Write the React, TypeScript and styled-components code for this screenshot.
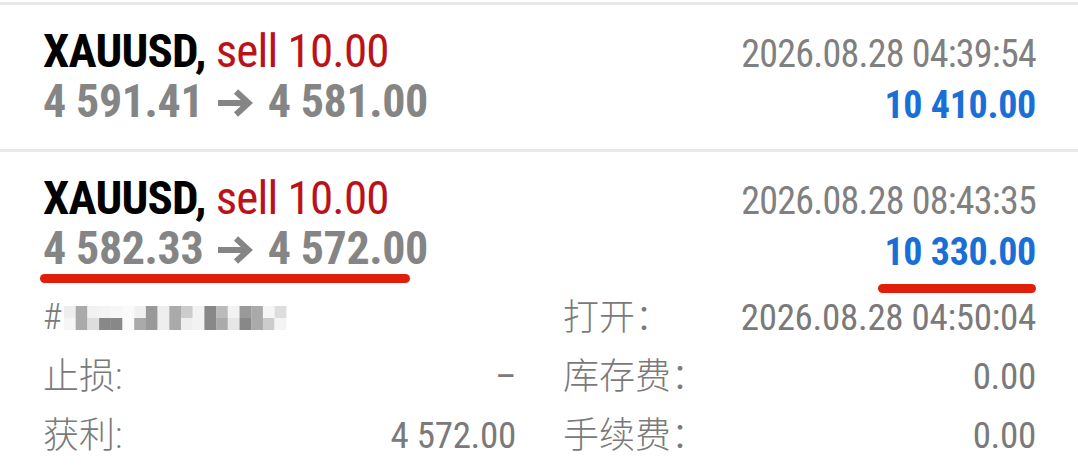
import React from "react";
import styled, { createGlobalStyle } from "styled-components";

const GlobalStyle = createGlobalStyle`
  body {
    margin: 0;
    background: #fff;
    font-family: "Roboto Condensed", Roboto, "Noto Sans CJK SC", sans-serif;
    font-stretch: 75%;
  }
`;

type Deal = {
  symbol: string;
  side: string;
  volume: string;
  open: string;
  close: string;
  time: string;
  profit: string;
};

const deals: Deal[] = [
  { symbol: "XAUUSD,", side: "sell", volume: "10.00", open: "4 591.41", close: "4 581.00", time: "2026.08.28 04:39:54", profit: "10 410.00" },
  { symbol: "XAUUSD,", side: "sell", volume: "10.00", open: "4 582.33", close: "4 572.00", time: "2026.08.28 08:43:35", profit: "10 330.00" },
];

// blurred ticket number
const mosaic = [
  ["#eee", "#aaa", "#f2f2f2", "#f4f4f4", "#f6f6f6", "#fafafa", "#f0f0f0", "#999", "#eee", "#aaa", "#ccc", "#f2f2f2", "#888", "#bbb", "#f2f2f2", "#999", "#aaa", "#f6f6f6", "#ddd"],
  ["#f6f6f6", "#aaa", "#ddd", "#888", "#888", "#fafafa", "#aaa", "#999", "#eee", "#aaa", "#eee", "#f2f2f2", "#888", "#aaa", "#e6e6e6", "#888", "#aaa", "#ccc", "#f4f4f4"],
];

const Arrow = () => (
  <ArrowIcon width="40" height="30" viewBox="0 0 40 30">
    <path d="M3 15 H33" stroke="currentColor" strokeWidth="6" fill="none" />
    <path d="M21 3.5 L33.5 15 L21 26.5" stroke="currentColor" strokeWidth="6" fill="none" strokeLinejoin="miter" />
  </ArrowIcon>
);

const App = () => {
  return (
    <Page>
      <GlobalStyle />
      {deals.map((d, i) => (
        <Row key={i}>
          <Head>
            <Left>
              <Title>
                <Symbol>{d.symbol}</Symbol> <Side>{d.side} {d.volume}</Side>
              </Title>
              <Prices>
                {d.open} <Arrow /> {d.close}
              </Prices>
            </Left>
            <Right>
              <Time>{d.time}</Time>
              <Profit>{d.profit}</Profit>
            </Right>
          </Head>
          {i === 1 && (
            <>
              <Marker $left={40} $top={122} $width={370} />
              <Marker $left={878} $top={132} $width={158} />
              <Details>
                <Cell>
                  <Label>
                    #
                    <svg width="224" height="24" viewBox="0 0 224 24" style={{ marginLeft: 2, filter: "blur(0.6px)" }}>
                      {mosaic.map((row, r) =>
                        row.map((c, k) => <rect key={`${r}-${k}`} x={k * 11.7} y={r * 12} width="11.8" height="12" fill={c} />)
                      )}
                    </svg>
                  </Label>
                </Cell>
                <Cell>
                  <Label>打开：</Label>
                  <Value>2026.08.28 04:50:04</Value>
                </Cell>
                <Cell>
                  <Label>止损:</Label>
                  <Value>–</Value>
                </Cell>
                <Cell>
                  <Label>库存费：</Label>
                  <Value>0.00</Value>
                </Cell>
                <Cell>
                  <Label>获利:</Label>
                  <Value>4 572.00</Value>
                </Cell>
                <Cell>
                  <Label>手续费：</Label>
                  <Value>0.00</Value>
                </Cell>
              </Details>
            </>
          )}
        </Row>
      ))}
    </Page>
  );
};

export default App;

const Page = styled.div`
  width: 1078px;
  height: 472px;
  overflow: hidden;
  padding-top: 2px;
  box-sizing: border-box;
  background: #fff;
`;

const Row = styled.div`
  position: relative;
  border-top: 3px solid #e8e8e8;
  padding: 20px 42px 18px 43px;
`;

const Head = styled.div`
  display: flex;
  justify-content: space-between;
  align-items: baseline;
`;

const Left = styled.div`
  display: flex;
  flex-direction: column;
`;

const Right = styled.div`
  display: flex;
  flex-direction: column;
  align-items: flex-end;
`;

const Title = styled.div`
  font-size: 47px;
  line-height: 51px;
  letter-spacing: -0.8px;
  white-space: nowrap;
`;

const Symbol = styled.span`
  font-weight: 700;
  color: #000;
`;

const Side = styled.span`
  color: #bb1219;
`;

const Prices = styled.div`
  font-size: 46px;
  line-height: 51px;
  font-weight: 700;
  letter-spacing: -0.4px;
  color: #858585;
  white-space: nowrap;
`;

const ArrowIcon = styled.svg`
  display: inline-block;
  vertical-align: -1px;
  margin: 0 2px;
`;

const Time = styled.div`
  font-size: 38px;
  line-height: 51px;
  letter-spacing: -0.75px;
  color: #808080;
`;

const Profit = styled.div`
  font-size: 38px;
  line-height: 51px;
  font-weight: 700;
  letter-spacing: -0.3px;
  color: #1a6fd6;
`;

const Marker = styled.div<{ $left: number; $top: number; $width: number }>`
  position: absolute;
  left: ${(p) => p.$left}px;
  top: ${(p) => p.$top}px;
  width: ${(p) => p.$width}px;
  height: 9px;
  border-radius: 5px;
  background: #e01e0a;
`;

const Details = styled.div`
  display: grid;
  grid-template-columns: 1fr 1fr;
  column-gap: 47px;
  margin-top: 10px;
`;

const Cell = styled.div`
  display: flex;
  justify-content: space-between;
  align-items: baseline;
  height: 59px;
  line-height: 59px;
  color: #7a7a7a;
`;

const Label = styled.span`
  display: inline-flex;
  align-items: center;
  font-size: 36px;
  font-family: Roboto, "Noto Sans CJK SC", sans-serif;
  font-weight: 300;
`;

const Value = styled.span`
  font-size: 37px;
  letter-spacing: -0.3px;
`;
